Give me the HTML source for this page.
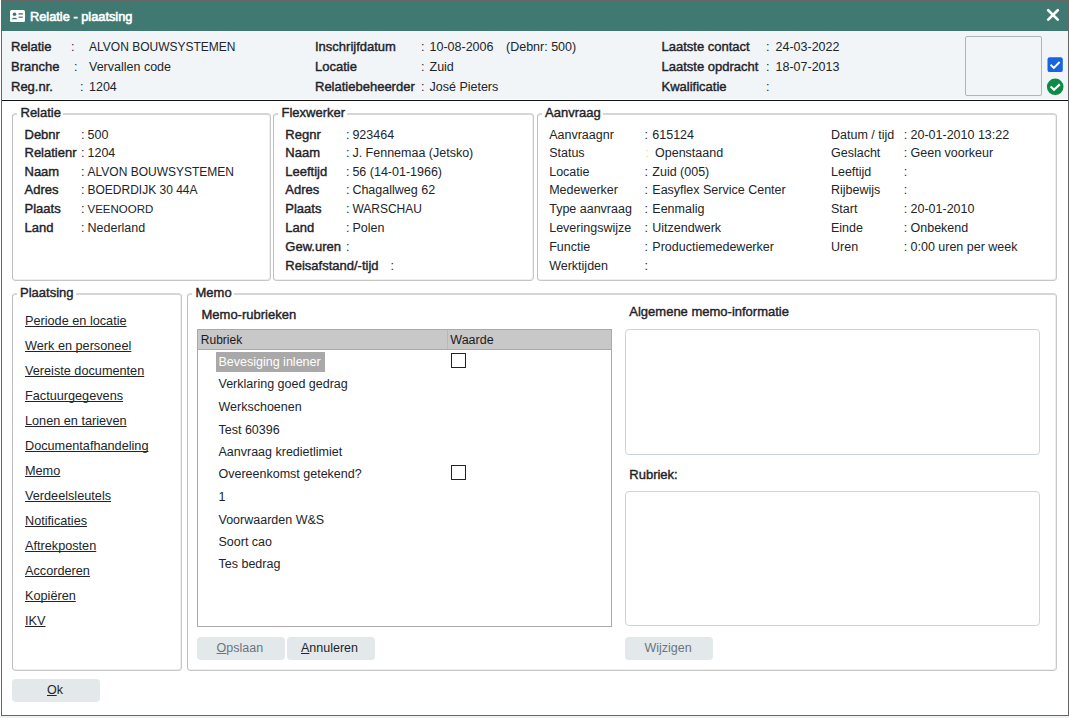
<!DOCTYPE html>
<html><head><meta charset="utf-8"><style>
html,body{margin:0;padding:0;width:1069px;height:718px;overflow:hidden;background:#fff;}
body{position:relative;font-family:"Liberation Sans",sans-serif;}
.r{position:absolute;}
.t{position:absolute;white-space:pre;text-decoration-skip-ink:none;}
</style></head><body>
<div class="r" style="left:1px;top:0px;width:1068px;height:716px;border:1px solid #666;box-sizing:border-box;background:#fff;"></div>
<div class="r" style="left:2px;top:1px;width:1066px;height:30px;background:#407872;"></div>
<div class="r" style="left:2px;top:31px;width:1066px;height:68px;background:#f1f5f8;"></div>
<div class="r" style="left:2px;top:100px;width:1066px;height:1px;background:#111;"></div>
<div class="r" style="left:0px;top:716px;width:1069px;height:2px;background:#eef2f5;"></div>
<svg class="r" style="left:10px;top:10px" width="15" height="12" viewBox="0 0 15 12"><rect x="0" y="0" width="15" height="12" rx="1.5" fill="#fff"/><circle cx="4.5" cy="4.2" r="1.8" fill="#407872"/><path d="M1.8 9.2 C2 7.2 7 7.2 7.2 9.2 Z" fill="#407872"/><rect x="8.6" y="3.2" width="4.2" height="1.4" fill="#407872"/><rect x="8.6" y="6.6" width="4.2" height="1.2" fill="#407872"/></svg>
<div class="t " style="left:30px;top:9px;font-size:12.8px;line-height:15px;color:#fff;-webkit-text-stroke:0.6px #fff;">Relatie - plaatsing</div>
<svg class="r" style="left:1046px;top:8px" width="14" height="14" viewBox="0 0 14 14"><path d="M2.2 2.2 L11.8 11.6 M11.8 2.2 L2.2 11.6" stroke="#fff" stroke-width="2.7" stroke-linecap="round"/></svg>
<div class="t " style="left:11px;top:39px;font-size:13px;line-height:15px;color:#1f2328;-webkit-text-stroke:0.4px #1f2328;">Relatie</div>
<div class="t " style="left:71px;top:40px;font-size:12.5px;line-height:14px;color:#212529;">:</div>
<div class="t " style="left:89px;top:40px;font-size:12px;line-height:14px;color:#212529;">ALVON BOUWSYSTEMEN</div>
<div class="t " style="left:11px;top:59px;font-size:13px;line-height:15px;color:#1f2328;-webkit-text-stroke:0.4px #1f2328;">Branche</div>
<div class="t " style="left:74px;top:60px;font-size:12.5px;line-height:14px;color:#212529;">:</div>
<div class="t " style="left:89px;top:60px;font-size:12.5px;line-height:14px;color:#212529;">Vervallen code</div>
<div class="t " style="left:11px;top:79px;font-size:13px;line-height:15px;color:#1f2328;-webkit-text-stroke:0.4px #1f2328;">Reg.nr.</div>
<div class="t " style="left:80px;top:80px;font-size:12.5px;line-height:14px;color:#212529;">:</div>
<div class="t " style="left:89px;top:80px;font-size:12.5px;line-height:14px;color:#212529;">1204</div>
<div class="t " style="left:315px;top:39px;font-size:13px;line-height:15px;color:#1f2328;-webkit-text-stroke:0.4px #1f2328;">Inschrijfdatum</div>
<div class="t " style="left:421px;top:40px;font-size:12.5px;line-height:14px;color:#212529;">:</div>
<div class="t " style="left:429.5px;top:40px;font-size:12.5px;line-height:14px;color:#212529;">10-08-2006</div>
<div class="t " style="left:315px;top:59px;font-size:13px;line-height:15px;color:#1f2328;-webkit-text-stroke:0.4px #1f2328;">Locatie</div>
<div class="t " style="left:421px;top:60px;font-size:12.5px;line-height:14px;color:#212529;">:</div>
<div class="t " style="left:429.5px;top:60px;font-size:12.5px;line-height:14px;color:#212529;">Zuid</div>
<div class="t " style="left:315px;top:79px;font-size:13px;line-height:15px;color:#1f2328;-webkit-text-stroke:0.4px #1f2328;">Relatiebeheerder</div>
<div class="t " style="left:421px;top:80px;font-size:12.5px;line-height:14px;color:#212529;">:</div>
<div class="t " style="left:429.5px;top:80px;font-size:12.5px;line-height:14px;color:#212529;">Jos&eacute; Pieters</div>
<div class="t " style="left:506px;top:40px;font-size:12.5px;line-height:14px;color:#212529;">(Debnr: 500)</div>
<div class="t " style="left:661.5px;top:39px;font-size:13px;line-height:15px;color:#1f2328;-webkit-text-stroke:0.4px #1f2328;">Laatste contact</div>
<div class="t " style="left:766px;top:40px;font-size:12.5px;line-height:14px;color:#212529;">:</div>
<div class="t " style="left:775.5px;top:40px;font-size:12.5px;line-height:14px;color:#212529;">24-03-2022</div>
<div class="t " style="left:661.5px;top:59px;font-size:13px;line-height:15px;color:#1f2328;-webkit-text-stroke:0.4px #1f2328;">Laatste opdracht</div>
<div class="t " style="left:766px;top:60px;font-size:12.5px;line-height:14px;color:#212529;">:</div>
<div class="t " style="left:775.5px;top:60px;font-size:12.5px;line-height:14px;color:#212529;">18-07-2013</div>
<div class="t " style="left:661.5px;top:79px;font-size:13px;line-height:15px;color:#1f2328;-webkit-text-stroke:0.4px #1f2328;">Kwalificatie</div>
<div class="t " style="left:766px;top:80px;font-size:12.5px;line-height:14px;color:#212529;">:</div>
<div class="t " style="left:775.5px;top:80px;font-size:12.5px;line-height:14px;color:#212529;"></div>
<div class="r" style="left:965px;top:36px;width:77px;height:60px;border:1px solid #b4b4b4;border-radius:2px;box-sizing:border-box;"></div>
<svg class="r" style="left:1047px;top:57px" width="16" height="16" viewBox="0 0 16 16"><rect x="0.5" y="0.2" width="15.3" height="14.9" rx="2.2" fill="#1764de"/><path d="M3.6 7.8 L6.8 10.9 L12.6 5.0" stroke="#fff" stroke-width="1.9" fill="none"/></svg>
<svg class="r" style="left:1046px;top:78px" width="18" height="18" viewBox="0 0 18 18"><circle cx="9.2" cy="8.8" r="8.3" fill="#0e8a47"/><path d="M4.6 8.4 L8.0 11.7 L13.8 6.4" stroke="#fff" stroke-width="2.1" fill="none"/></svg>
<div class="r" style="left:12px;top:113px;width:259px;height:168px;border-style:solid;border-color:#d6d6d6 #c8c8c8 #c6c6c6 #bdbdbd;border-width:2px 1px 1px 1px;border-radius:4px;box-sizing:border-box;box-shadow:inset -1px -1px 0 #efefef;"></div>
<div class="r" style="left:17.0px;top:112px;width:45.984375px;height:4px;background:#fff;"></div>
<div class="t " style="left:20.5px;top:105px;font-size:13px;line-height:15px;color:#1f2328;-webkit-text-stroke:0.4px #1f2328;">Relatie</div>
<div class="r" style="left:273px;top:113px;width:261px;height:168px;border-style:solid;border-color:#d6d6d6 #c8c8c8 #c6c6c6 #bdbdbd;border-width:2px 1px 1px 1px;border-radius:4px;box-sizing:border-box;box-shadow:inset -1px -1px 0 #efefef;"></div>
<div class="r" style="left:278.0px;top:112px;width:69.078125px;height:4px;background:#fff;"></div>
<div class="t " style="left:281.5px;top:105px;font-size:13px;line-height:15px;color:#1f2328;-webkit-text-stroke:0.4px #1f2328;">Flexwerker</div>
<div class="r" style="left:537px;top:113px;width:520px;height:168px;border-style:solid;border-color:#d6d6d6 #c8c8c8 #c6c6c6 #bdbdbd;border-width:2px 1px 1px 1px;border-radius:4px;box-sizing:border-box;box-shadow:inset -1px -1px 0 #efefef;"></div>
<div class="r" style="left:541.5px;top:112px;width:61.171875px;height:4px;background:#fff;"></div>
<div class="t " style="left:545px;top:105px;font-size:13px;line-height:15px;color:#1f2328;-webkit-text-stroke:0.4px #1f2328;">Aanvraag</div>
<div class="r" style="left:12px;top:293px;width:170px;height:378px;border-style:solid;border-color:#d6d6d6 #c8c8c8 #c6c6c6 #bdbdbd;border-width:2px 1px 1px 1px;border-radius:4px;box-sizing:border-box;box-shadow:inset -1px -1px 0 #efefef;"></div>
<div class="r" style="left:16.5px;top:292px;width:59.0px;height:4px;background:#fff;"></div>
<div class="t " style="left:20px;top:285px;font-size:13px;line-height:15px;color:#1f2328;-webkit-text-stroke:0.4px #1f2328;">Plaatsing</div>
<div class="r" style="left:187px;top:293px;width:870px;height:378px;border-style:solid;border-color:#d6d6d6 #c8c8c8 #c6c6c6 #bdbdbd;border-width:2px 1px 1px 1px;border-radius:4px;box-sizing:border-box;box-shadow:inset -1px -1px 0 #efefef;"></div>
<div class="r" style="left:192.0px;top:292px;width:41.625px;height:4px;background:#fff;"></div>
<div class="t " style="left:195.5px;top:285px;font-size:13px;line-height:15px;color:#1f2328;-webkit-text-stroke:0.4px #1f2328;">Memo</div>
<div class="t " style="left:24.5px;top:127px;font-size:13px;line-height:15px;color:#1f2328;-webkit-text-stroke:0.4px #1f2328;">Debnr</div>
<div class="t " style="left:81px;top:128px;font-size:12.5px;line-height:14px;color:#212529;">:</div>
<div class="t " style="left:87.5px;top:128px;font-size:12.5px;line-height:14px;color:#212529;">500</div>
<div class="t " style="left:24.5px;top:145px;font-size:13px;line-height:15px;color:#1f2328;-webkit-text-stroke:0.4px #1f2328;">Relatienr</div>
<div class="t " style="left:81px;top:146px;font-size:12.5px;line-height:14px;color:#212529;">:</div>
<div class="t " style="left:87.5px;top:146px;font-size:12.5px;line-height:14px;color:#212529;">1204</div>
<div class="t " style="left:24.5px;top:164px;font-size:13px;line-height:15px;color:#1f2328;-webkit-text-stroke:0.4px #1f2328;">Naam</div>
<div class="t " style="left:81px;top:165px;font-size:12.5px;line-height:14px;color:#212529;">:</div>
<div class="t " style="left:87.5px;top:165px;font-size:12px;line-height:14px;color:#212529;">ALVON BOUWSYSTEMEN</div>
<div class="t " style="left:24.5px;top:182px;font-size:13px;line-height:15px;color:#1f2328;-webkit-text-stroke:0.4px #1f2328;">Adres</div>
<div class="t " style="left:81px;top:183px;font-size:12.5px;line-height:14px;color:#212529;">:</div>
<div class="t " style="left:87.5px;top:183px;font-size:12px;line-height:14px;color:#212529;">BOEDRDIJK 30 44A</div>
<div class="t " style="left:24.5px;top:201px;font-size:13px;line-height:15px;color:#1f2328;-webkit-text-stroke:0.4px #1f2328;">Plaats</div>
<div class="t " style="left:81px;top:202px;font-size:12.5px;line-height:14px;color:#212529;">:</div>
<div class="t " style="left:87.5px;top:203px;font-size:11.5px;line-height:12px;color:#212529;">VEENOORD</div>
<div class="t " style="left:24.5px;top:220px;font-size:13px;line-height:15px;color:#1f2328;-webkit-text-stroke:0.4px #1f2328;">Land</div>
<div class="t " style="left:81px;top:221px;font-size:12.5px;line-height:14px;color:#212529;">:</div>
<div class="t " style="left:87.5px;top:221px;font-size:12.5px;line-height:14px;color:#212529;">Nederland</div>
<div class="t " style="left:285.3px;top:127px;font-size:13px;line-height:15px;color:#1f2328;-webkit-text-stroke:0.4px #1f2328;">Regnr</div>
<div class="t " style="left:346px;top:128px;font-size:12.5px;line-height:14px;color:#212529;">:</div>
<div class="t " style="left:352.4px;top:128px;font-size:12.5px;line-height:14px;color:#212529;">923464</div>
<div class="t " style="left:285.3px;top:145px;font-size:13px;line-height:15px;color:#1f2328;-webkit-text-stroke:0.4px #1f2328;">Naam</div>
<div class="t " style="left:346px;top:146px;font-size:12.5px;line-height:14px;color:#212529;">:</div>
<div class="t " style="left:352.4px;top:146px;font-size:12.5px;line-height:14px;color:#212529;">J. Fennemaa (Jetsko)</div>
<div class="t " style="left:285.3px;top:164px;font-size:13px;line-height:15px;color:#1f2328;-webkit-text-stroke:0.4px #1f2328;">Leeftijd</div>
<div class="t " style="left:346px;top:165px;font-size:12.5px;line-height:14px;color:#212529;">:</div>
<div class="t " style="left:352.4px;top:165px;font-size:12.5px;line-height:14px;color:#212529;">56 (14-01-1966)</div>
<div class="t " style="left:285.3px;top:182px;font-size:13px;line-height:15px;color:#1f2328;-webkit-text-stroke:0.4px #1f2328;">Adres</div>
<div class="t " style="left:346px;top:183px;font-size:12.5px;line-height:14px;color:#212529;">:</div>
<div class="t " style="left:352.4px;top:183px;font-size:12.5px;line-height:14px;color:#212529;">Chagallweg 62</div>
<div class="t " style="left:285.3px;top:201px;font-size:13px;line-height:15px;color:#1f2328;-webkit-text-stroke:0.4px #1f2328;">Plaats</div>
<div class="t " style="left:346px;top:202px;font-size:12.5px;line-height:14px;color:#212529;">:</div>
<div class="t " style="left:352.4px;top:202px;font-size:12px;line-height:14px;color:#212529;">WARSCHAU</div>
<div class="t " style="left:285.3px;top:220px;font-size:13px;line-height:15px;color:#1f2328;-webkit-text-stroke:0.4px #1f2328;">Land</div>
<div class="t " style="left:346px;top:221px;font-size:12.5px;line-height:14px;color:#212529;">:</div>
<div class="t " style="left:352.4px;top:221px;font-size:12.5px;line-height:14px;color:#212529;">Polen</div>
<div class="t " style="left:285.3px;top:239px;font-size:13px;line-height:15px;color:#1f2328;-webkit-text-stroke:0.4px #1f2328;">Gew.uren</div>
<div class="t " style="left:346px;top:240px;font-size:12.5px;line-height:14px;color:#212529;">:</div>
<div class="t " style="left:285.3px;top:258px;font-size:13px;line-height:15px;color:#1f2328;-webkit-text-stroke:0.4px #1f2328;">Reisafstand/-tijd</div>
<div class="t " style="left:390.5px;top:259px;font-size:12.5px;line-height:14px;color:#212529;">:</div>
<div class="t " style="left:549.2px;top:128px;font-size:12.5px;line-height:14px;color:#212529;">Aanvraagnr</div>
<div class="t " style="left:644.5px;top:128px;font-size:12.5px;line-height:14px;color:#212529;">:</div>
<div class="t " style="left:652.3px;top:128px;font-size:12.5px;line-height:14px;color:#212529;">615124</div>
<div class="t " style="left:549.2px;top:146px;font-size:12.5px;line-height:14px;color:#212529;">Status</div>
<div class="t " style="left:645.5px;top:146px;font-size:12.5px;line-height:14px;color:#fcd29a;">:</div>
<div class="t " style="left:655px;top:146px;font-size:12.5px;line-height:14px;color:#212529;">Openstaand</div>
<div class="t " style="left:549.2px;top:165px;font-size:12.5px;line-height:14px;color:#212529;">Locatie</div>
<div class="t " style="left:644.5px;top:165px;font-size:12.5px;line-height:14px;color:#212529;">:</div>
<div class="t " style="left:652.3px;top:165px;font-size:12.5px;line-height:14px;color:#212529;">Zuid (005)</div>
<div class="t " style="left:549.2px;top:183px;font-size:12.5px;line-height:14px;color:#212529;">Medewerker</div>
<div class="t " style="left:644.5px;top:183px;font-size:12.5px;line-height:14px;color:#212529;">:</div>
<div class="t " style="left:652.3px;top:183px;font-size:12.5px;line-height:14px;color:#212529;">Easyflex Service Center</div>
<div class="t " style="left:549.2px;top:202px;font-size:12.5px;line-height:14px;color:#212529;">Type aanvraag</div>
<div class="t " style="left:644.5px;top:202px;font-size:12.5px;line-height:14px;color:#212529;">:</div>
<div class="t " style="left:652.3px;top:202px;font-size:12.5px;line-height:14px;color:#212529;">Eenmalig</div>
<div class="t " style="left:549.2px;top:221px;font-size:12.5px;line-height:14px;color:#212529;">Leveringswijze</div>
<div class="t " style="left:644.5px;top:221px;font-size:12.5px;line-height:14px;color:#212529;">:</div>
<div class="t " style="left:652.3px;top:221px;font-size:12.5px;line-height:14px;color:#212529;">Uitzendwerk</div>
<div class="t " style="left:549.2px;top:240px;font-size:12.5px;line-height:14px;color:#212529;">Functie</div>
<div class="t " style="left:644.5px;top:240px;font-size:12.5px;line-height:14px;color:#212529;">:</div>
<div class="t " style="left:652.3px;top:240px;font-size:12.5px;line-height:14px;color:#212529;">Productiemedewerker</div>
<div class="t " style="left:549.2px;top:259px;font-size:12.5px;line-height:14px;color:#212529;">Werktijden</div>
<div class="t " style="left:644.5px;top:259px;font-size:12.5px;line-height:14px;color:#212529;">:</div>
<div class="t " style="left:652.3px;top:259px;font-size:12.5px;line-height:14px;color:#212529;"></div>
<div class="t " style="left:831px;top:128px;font-size:12.5px;line-height:14px;color:#212529;">Datum / tijd</div>
<div class="t " style="left:903.8px;top:128px;font-size:12.5px;line-height:14px;color:#212529;">:</div>
<div class="t " style="left:910.5px;top:128px;font-size:12.5px;line-height:14px;color:#212529;">20-01-2010 13:22</div>
<div class="t " style="left:831px;top:146px;font-size:12.5px;line-height:14px;color:#212529;">Geslacht</div>
<div class="t " style="left:903.8px;top:146px;font-size:12.5px;line-height:14px;color:#212529;">:</div>
<div class="t " style="left:910.5px;top:146px;font-size:12.5px;line-height:14px;color:#212529;">Geen voorkeur</div>
<div class="t " style="left:831px;top:165px;font-size:12.5px;line-height:14px;color:#212529;">Leeftijd</div>
<div class="t " style="left:903.8px;top:165px;font-size:12.5px;line-height:14px;color:#212529;">:</div>
<div class="t " style="left:910.5px;top:165px;font-size:12.5px;line-height:14px;color:#212529;"></div>
<div class="t " style="left:831px;top:183px;font-size:12.5px;line-height:14px;color:#212529;">Rijbewijs</div>
<div class="t " style="left:903.8px;top:183px;font-size:12.5px;line-height:14px;color:#212529;">:</div>
<div class="t " style="left:910.5px;top:183px;font-size:12.5px;line-height:14px;color:#212529;"></div>
<div class="t " style="left:831px;top:202px;font-size:12.5px;line-height:14px;color:#212529;">Start</div>
<div class="t " style="left:903.8px;top:202px;font-size:12.5px;line-height:14px;color:#212529;">:</div>
<div class="t " style="left:910.5px;top:202px;font-size:12.5px;line-height:14px;color:#212529;">20-01-2010</div>
<div class="t " style="left:831px;top:221px;font-size:12.5px;line-height:14px;color:#212529;">Einde</div>
<div class="t " style="left:903.8px;top:221px;font-size:12.5px;line-height:14px;color:#212529;">:</div>
<div class="t " style="left:910.5px;top:221px;font-size:12.5px;line-height:14px;color:#212529;">Onbekend</div>
<div class="t " style="left:831px;top:240px;font-size:12.5px;line-height:14px;color:#212529;">Uren</div>
<div class="t " style="left:903.8px;top:240px;font-size:12.5px;line-height:14px;color:#212529;">:</div>
<div class="t " style="left:910.5px;top:240px;font-size:12.5px;line-height:14px;color:#212529;">0:00 uren per week</div>
<div class="t " style="left:25px;top:314px;font-size:12.7px;line-height:14px;color:#212529;text-decoration:underline;text-decoration-skip-ink:none;">Periode en locatie</div>
<div class="t " style="left:25px;top:339px;font-size:12.7px;line-height:14px;color:#212529;text-decoration:underline;text-decoration-skip-ink:none;">Werk en personeel</div>
<div class="t " style="left:25px;top:364px;font-size:12.7px;line-height:14px;color:#212529;text-decoration:underline;text-decoration-skip-ink:none;">Vereiste documenten</div>
<div class="t " style="left:25px;top:389px;font-size:12.7px;line-height:14px;color:#212529;text-decoration:underline;text-decoration-skip-ink:none;">Factuurgegevens</div>
<div class="t " style="left:25px;top:414px;font-size:12.7px;line-height:14px;color:#212529;text-decoration:underline;text-decoration-skip-ink:none;">Lonen en tarieven</div>
<div class="t " style="left:25px;top:439px;font-size:12.7px;line-height:14px;color:#212529;text-decoration:underline;text-decoration-skip-ink:none;">Documentafhandeling</div>
<div class="t " style="left:25px;top:464px;font-size:12.7px;line-height:14px;color:#212529;text-decoration:underline;text-decoration-skip-ink:none;">Memo</div>
<div class="t " style="left:25px;top:489px;font-size:12.7px;line-height:14px;color:#212529;text-decoration:underline;text-decoration-skip-ink:none;">Verdeelsleutels</div>
<div class="t " style="left:25px;top:514px;font-size:12.7px;line-height:14px;color:#212529;text-decoration:underline;text-decoration-skip-ink:none;">Notificaties</div>
<div class="t " style="left:25px;top:539px;font-size:12.7px;line-height:14px;color:#212529;text-decoration:underline;text-decoration-skip-ink:none;">Aftrekposten</div>
<div class="t " style="left:25px;top:564px;font-size:12.7px;line-height:14px;color:#212529;text-decoration:underline;text-decoration-skip-ink:none;">Accorderen</div>
<div class="t " style="left:25px;top:589px;font-size:12.7px;line-height:14px;color:#212529;text-decoration:underline;text-decoration-skip-ink:none;">Kopi&euml;ren</div>
<div class="t " style="left:25px;top:614px;font-size:12.7px;line-height:14px;color:#212529;text-decoration:underline;text-decoration-skip-ink:none;">IKV</div>
<div class="t " style="left:201.5px;top:307px;font-size:13px;line-height:15px;color:#1f2328;-webkit-text-stroke:0.4px #1f2328;">Memo-rubrieken</div>
<div class="r" style="left:197px;top:329px;width:415px;height:298px;border:1px solid #aaa;box-sizing:border-box;background:#fff;"></div>
<div class="r" style="left:198px;top:330px;width:413px;height:19px;background:#c8c8c8;"></div>
<div class="r" style="left:198px;top:349px;width:413px;height:1px;background:#aaa;"></div>
<div class="r" style="left:447px;top:330px;width:1px;height:19px;background:#b8b8b8;"></div>
<div class="t " style="left:200.8px;top:333px;font-size:12px;line-height:14px;color:#1a1a1a;">Rubriek</div>
<div class="t " style="left:450.3px;top:333px;font-size:12.5px;line-height:14px;color:#1a1a1a;">Waarde</div>
<div class="r" style="left:216px;top:352px;width:109px;height:20px;background:#a9a9a9;"></div>
<div class="t " style="left:218.5px;top:355px;font-size:12.5px;line-height:14px;color:#fff;">Bevesiging inlener</div>
<div class="t " style="left:218.5px;top:377px;font-size:12.5px;line-height:14px;color:#212529;">Verklaring goed gedrag</div>
<div class="t " style="left:218.5px;top:400px;font-size:12.5px;line-height:14px;color:#212529;">Werkschoenen</div>
<div class="t " style="left:218.5px;top:423px;font-size:12.5px;line-height:14px;color:#212529;">Test 60396</div>
<div class="t " style="left:218.5px;top:445px;font-size:12.5px;line-height:14px;color:#212529;">Aanvraag kredietlimiet</div>
<div class="t " style="left:218.5px;top:467px;font-size:12.5px;line-height:14px;color:#212529;">Overeenkomst getekend?</div>
<div class="t " style="left:218.5px;top:490px;font-size:12.5px;line-height:14px;color:#212529;">1</div>
<div class="t " style="left:218.5px;top:513px;font-size:12.5px;line-height:14px;color:#212529;">Voorwaarden W&amp;S</div>
<div class="t " style="left:218.5px;top:535px;font-size:12.5px;line-height:14px;color:#212529;">Soort cao</div>
<div class="t " style="left:218.5px;top:557px;font-size:12.5px;line-height:14px;color:#212529;">Tes bedrag</div>
<div class="r" style="left:451px;top:353px;width:15px;height:15px;border:1px solid #222;box-sizing:border-box;background:#fff;"></div>
<div class="r" style="left:451px;top:465px;width:15px;height:15px;border:1px solid #222;box-sizing:border-box;background:#fff;"></div>
<div class="r" style="left:197px;top:637px;width:88px;height:23px;background:#e3e8eb;border-radius:4px;"></div>
<div class="t " style="left:216.6px;top:641px;font-size:12.5px;line-height:14px;color:#6c757d;"><u>O</u>pslaan</div>
<div class="r" style="left:287px;top:637px;width:88px;height:23px;background:#e3e8eb;border-radius:4px;"></div>
<div class="t " style="left:301px;top:641px;font-size:12.5px;line-height:14px;color:#212529;"><u>A</u>nnuleren</div>
<div class="r" style="left:625px;top:637px;width:88px;height:23px;background:#e3e8eb;border-radius:4px;"></div>
<div class="t " style="left:644.4px;top:641px;font-size:12.5px;line-height:14px;color:#6c757d;">Wijzigen</div>
<div class="r" style="left:12px;top:679px;width:88px;height:23px;background:#e3e8eb;border-radius:4px;"></div>
<div class="t " style="left:47px;top:683px;font-size:12.5px;line-height:14px;color:#212529;"><u>O</u>k</div>
<div class="t " style="left:629.3px;top:304px;font-size:13px;line-height:15px;color:#1f2328;-webkit-text-stroke:0.4px #1f2328;">Algemene memo-informatie</div>
<div class="r" style="left:625px;top:329px;width:415px;height:126px;border:1px solid #ccd5dd;border-radius:4px;box-sizing:border-box;background:#fff;"></div>
<div class="t " style="left:629.3px;top:467px;font-size:13px;line-height:15px;color:#1f2328;-webkit-text-stroke:0.4px #1f2328;">Rubriek:</div>
<div class="r" style="left:625px;top:491px;width:415px;height:135px;border:1px solid #ccd5dd;border-radius:4px;box-sizing:border-box;background:#fff;"></div>
</body></html>
